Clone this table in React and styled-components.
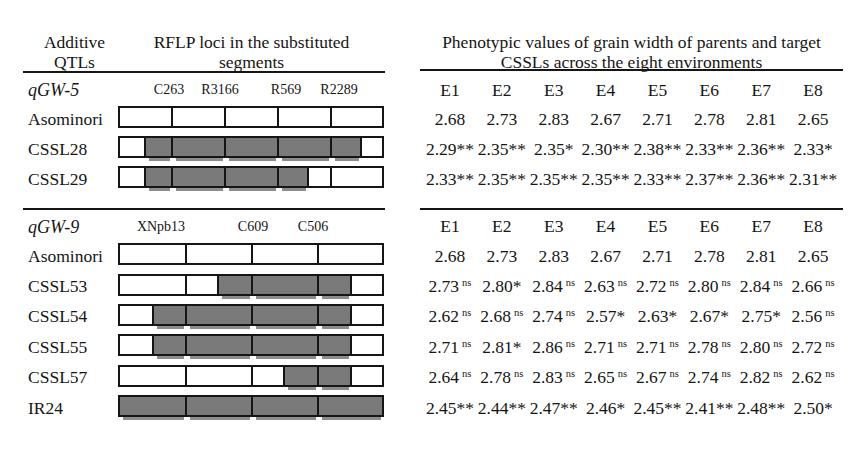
import React from 'react';
import styled, { createGlobalStyle } from 'styled-components';

//global
const GlobalStyle = createGlobalStyle`
    html, body {
        margin: 0;
        padding: 0;
        background: #ffffff;
    }
    body {
        font-family: "Liberation Serif", "Times New Roman", serif;
        color: #151515;
    }
`;

const INK = '#151515';
const GREY = '#7a7a7a';
const SHADE = '#8c8c8c';

//data
const sections = [
    {
        qtl: 'qGW-5',
        rowH: 30,
        markers: [['C263', 51], ['R3166', 102], ['R569', 168], ['R2289', 221]],
        rows: [
            { name: 'Asominori', cuts: [118, 171, 224, 277, 330, 384], fill: 'WWWWW', values: ['2.68', '2.73', '2.83', '2.67', '2.71', '2.78', '2.81', '2.65'] },
            { name: 'CSSL28', cuts: [118, 144, 171, 224, 277, 330, 360, 384], fill: 'WGGGGGW', values: ['2.29**', '2.35**', '2.35*', '2.30**', '2.38**', '2.33**', '2.36**', '2.33*'] },
            { name: 'CSSL29', cuts: [118, 144, 171, 224, 277, 307, 330, 384], fill: 'WGGGGWW', values: ['2.33**', '2.35**', '2.35**', '2.35**', '2.33**', '2.37**', '2.36**', '2.31**'] },
        ],
    },
    {
        qtl: 'qGW-9',
        rowH: 30.4,
        markers: [['XNpb13', 43], ['C609', 135], ['C506', 195]],
        rows: [
            { name: 'Asominori', cuts: [118, 185, 251, 317, 384], fill: 'WWWW', values: ['2.68', '2.73', '2.83', '2.67', '2.71', '2.78', '2.81', '2.65'] },
            { name: 'CSSL53', cuts: [118, 185, 217, 251, 317, 350, 384], fill: 'WWGGGW', values: ['2.73ns', '2.80*', '2.84ns', '2.63ns', '2.72ns', '2.80ns', '2.84ns', '2.66ns'] },
            { name: 'CSSL54', cuts: [118, 152, 185, 251, 317, 350, 384], fill: 'WGGGGW', values: ['2.62ns', '2.68ns', '2.74ns', '2.57*', '2.63*', '2.67*', '2.75*', '2.56ns'] },
            { name: 'CSSL55', cuts: [118, 152, 185, 251, 317, 350, 384], fill: 'WGGGGW', values: ['2.71ns', '2.81*', '2.86ns', '2.71ns', '2.71ns', '2.78ns', '2.80ns', '2.72ns'] },
            { name: 'CSSL57', cuts: [118, 185, 251, 283, 317, 350, 384], fill: 'WWWGGW', values: ['2.64ns', '2.78ns', '2.83ns', '2.65ns', '2.67ns', '2.74ns', '2.82ns', '2.62ns'] },
            { name: 'IR24', cuts: [118, 185, 251, 317, 384], fill: 'GGGG', values: ['2.45**', '2.44**', '2.47**', '2.46*', '2.45**', '2.41**', '2.48**', '2.50*'] },
        ],
    },
];

const envs = ['E1', 'E2', 'E3', 'E4', 'E5', 'E6', 'E7', 'E8'];

//css
const Page = styled.div`
    width: 867px;
    height: 459px;
    box-sizing: border-box;
    padding: 32px 0 0 23px;
    display: flex;
    flex-direction: column;
`;
const Section = styled.div`
    display: flex;
    flex-direction: column;
    margin-top: ${props => props.$gap}px;
`;
const Row = styled.div`
    display: flex;
`;
const LeftHalf = styled.div`
    width: 362px;
    height: ${props => props.$h}px;
    padding-top: ${props => props.$pt || 0}px;
    display: grid;
    grid-template-columns: 95px 267px;
    align-items: center;
    border-top: ${props => props.$ruleTop ? `2px solid ${INK}` : 'none'};
    border-bottom: ${props => props.$ruleBottom ? `2px solid ${INK}` : 'none'};
`;
const RightHalf = styled.div`
    width: 423px;
    margin-left: 35px;
    box-sizing: border-box;
    padding: ${props => props.$pt || 0}px 4px 0;
    height: ${props => props.$h + (props.$pt || 0)}px;
    display: grid;
    grid-template-columns: repeat(8, 1fr);
    align-items: center;
    border-top: ${props => props.$ruleTop ? `2px solid ${INK}` : 'none'};
    border-bottom: ${props => props.$ruleBottom ? `2px solid ${INK}` : 'none'};
`;
const HeadCell = styled.div`
    font-size: 17.5px;
    line-height: 20px;
    text-align: center;
    padding-left: ${props => props.$indent || 0}px;
    grid-column: ${props => props.$span ? '1 / -1' : 'auto'};
    align-self: start;
    white-space: nowrap;
`;
const Label = styled.div`
    font-size: 17.5px;
    padding-left: 5px;
    white-space: nowrap;
`;
const QtlName = styled.div`
    font-size: 18px;
    font-style: italic;
    padding-left: 5px;
`;
const Markers = styled.div`
    position: relative;
    height: 100%;
`;
const Marker = styled.span`
    position: absolute;
    top: 50%;
    transform: translate(-50%, -50%);
    font-size: 14px;
    white-space: nowrap;
`;
const Bar = styled.div`
    display: flex;
    width: 266px;
    height: 22px;
    box-sizing: border-box;
    border: 2px solid ${INK};
    margin-bottom: 4px;
`;
const Cell = styled.div`
    position: relative;
    flex: none;
    width: ${props => props.$w}px;
    height: 100%;
    box-sizing: border-box;
    background: ${props => props.$grey ? GREY : '#ffffff'};
    border-left: ${props => props.$first ? 'none' : `2px solid ${INK}`};
    &::after {
        content: '';
        display: ${props => props.$grey ? 'block' : 'none'};
        position: absolute;
        left: 3px;
        right: 1px;
        top: calc(100% + 2px);
        height: 3px;
        background: ${SHADE};
    }
`;
const Val = styled.div`
    font-size: 17.5px;
    text-align: center;
    white-space: nowrap;
`;
const Sup = styled.span`
    font-size: 10.5px;
    vertical-align: 6px;
    margin-left: 3px;
`;

const Chromosome = ({ cuts, fill }) => {
    const last = cuts.length - 2;
    return (
        <Bar>
            {cuts.slice(0, -1).map((c, i) => {
                let w = cuts[i + 1] - c;
                if (i === 0) w -= 2;
                if (i === last) w -= 2;
                return <Cell key={i} $w={w} $first={i === 0} $grey={fill[i] === 'G'} />;
            })}
        </Bar>
    );
};

const Value = ({ text }) => {
    if (text.endsWith('ns')) {
        return <Val>{text.slice(0, -2)}<Sup>ns</Sup></Val>;
    }
    return <Val>{text}</Val>;
};

export default function App() {
    return (
        <Page>
            <GlobalStyle />
            <Row>
                <LeftHalf $h={39} $ruleBottom>
                    <HeadCell $indent={8}>Additive<br />QTLs</HeadCell>
                    <HeadCell>RFLP loci in the substituted<br />segments</HeadCell>
                </LeftHalf>
                <RightHalf $h={39} $ruleBottom>
                    <HeadCell $span>Phenotypic values of grain width of parents and target<br />CSSLs across the eight environments</HeadCell>
                </RightHalf>
            </Row>

            {sections.map((sec, s) =>
                <Section key={sec.qtl} $gap={s === 0 ? 0 : 14}>
                    <Row>
                        <LeftHalf $h={28} $pt={3} $ruleTop={s > 0}>
                            <QtlName>{sec.qtl}</QtlName>
                            <Markers>
                                {sec.markers.map(([m, x]) =>
                                    <Marker key={m} style={{ left: x }}>{m}</Marker>)}
                            </Markers>
                        </LeftHalf>
                        <RightHalf $h={28} $pt={3} $ruleTop={s > 0}>
                            {envs.map(e => <Val key={e}>{e}</Val>)}
                        </RightHalf>
                    </Row>
                    {sec.rows.map(r =>
                        <Row key={r.name}>
                            <LeftHalf $h={sec.rowH}>
                                <Label>{r.name}</Label>
                                <Chromosome cuts={r.cuts} fill={r.fill} />
                            </LeftHalf>
                            <RightHalf $h={sec.rowH}>
                                {r.values.map((v, i) => <Value key={i} text={v} />)}
                            </RightHalf>
                        </Row>)}
                </Section>)}
        </Page>
    );
}
